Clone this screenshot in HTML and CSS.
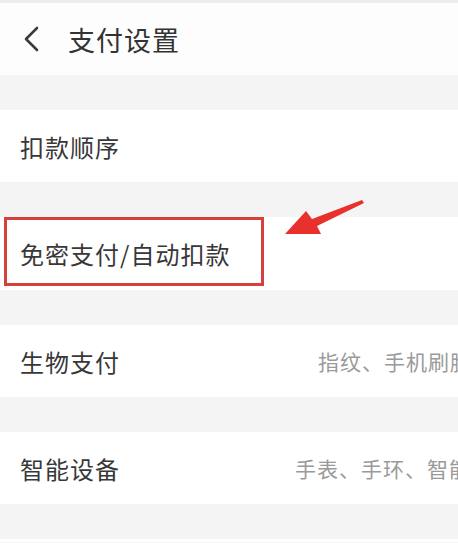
FILE: index.html
```html
<!DOCTYPE html>
<html lang="zh-CN">

<head>
    <meta charset="UTF-8">
    <title>支付设置</title>
    <link rel="stylesheet" href="styles.css">
</head>

<body>
    <header>
        <svg class="back" width="20" height="28" viewBox="0 0 20 28">
            <path d="M16 3 L5 14 L16 25" fill="none" stroke="#3a3a3a" stroke-width="2.6" stroke-linecap="round" stroke-linejoin="round" />
        </svg>
        <h1>支付设置</h1>
    </header>
    <div class="list">
        <div class="item">
            <div class="name">扣款顺序</div>
        </div>
        <div class="item mark">
            <div class="name">免密支付/自动扣款</div>
            <div class="frame"></div>
            <svg class="arrow" width="90" height="45" viewBox="0 0 90 45">
                <polygon points="81,4 83,7 36,30 40,38 4,38 25,15 31,23" fill="#e8312c" />
            </svg>
        </div>
        <div class="item">
            <div class="name">生物支付</div>
            <div class="desc desc-bio">指纹、手机刷脸</div>
        </div>
        <div class="item">
            <div class="name">智能设备</div>
            <div class="desc desc-dev">手表、手环、智能设备</div>
        </div>
        <div class="item last"></div>
    </div>
</body>

</html>
```

FILE: styles.css
```css
html,
body {
    margin: 0;
    padding: 0;
    height: 100%;
    overflow: hidden;
    background: #f4f4f4;
    font-family: "Noto Sans CJK SC", "Noto Sans", sans-serif;
}

header {
    height: 72px;
    border-top: 3px solid #ededed;
    background: #fdfdfd;
    display: flex;
    align-items: center;
    padding-left: 21px;
}

.back {
    flex: none;
}

h1 {
    margin: 0 0 0 27px;
    padding: 0;
    font-size: 27px;
    font-weight: normal;
    color: #333;
    letter-spacing: 1px;
}

.list {
    display: flex;
    flex-direction: column;
}

.item {
    height: 72px;
    margin-top: 35px;
    background: #fff;
    display: flex;
    align-items: center;
    justify-content: space-between;
    padding-left: 20px;
    overflow: hidden;
    white-space: nowrap;
}

.mark {
    position: relative;
    height: 73px;
    overflow: visible;
}

.last {
    height: 3px;
}

.name {
    font-size: 24px;
    color: #383838;
    letter-spacing: 1px;
}

.desc {
    font-size: 21px;
    color: #9a9a9a;
    letter-spacing: 1px;
    flex: none;
}

.desc-bio {
    margin-right: -14px;
}

.desc-dev {
    margin-right: -57px;
}

/* 标注框和箭头 */
.frame {
    position: absolute;
    left: 4px;
    top: 0;
    width: 254px;
    height: 63px;
    border: 3px solid #d8403c;
}

.arrow {
    position: absolute;
    left: 281px;
    top: -21px;
}
```
